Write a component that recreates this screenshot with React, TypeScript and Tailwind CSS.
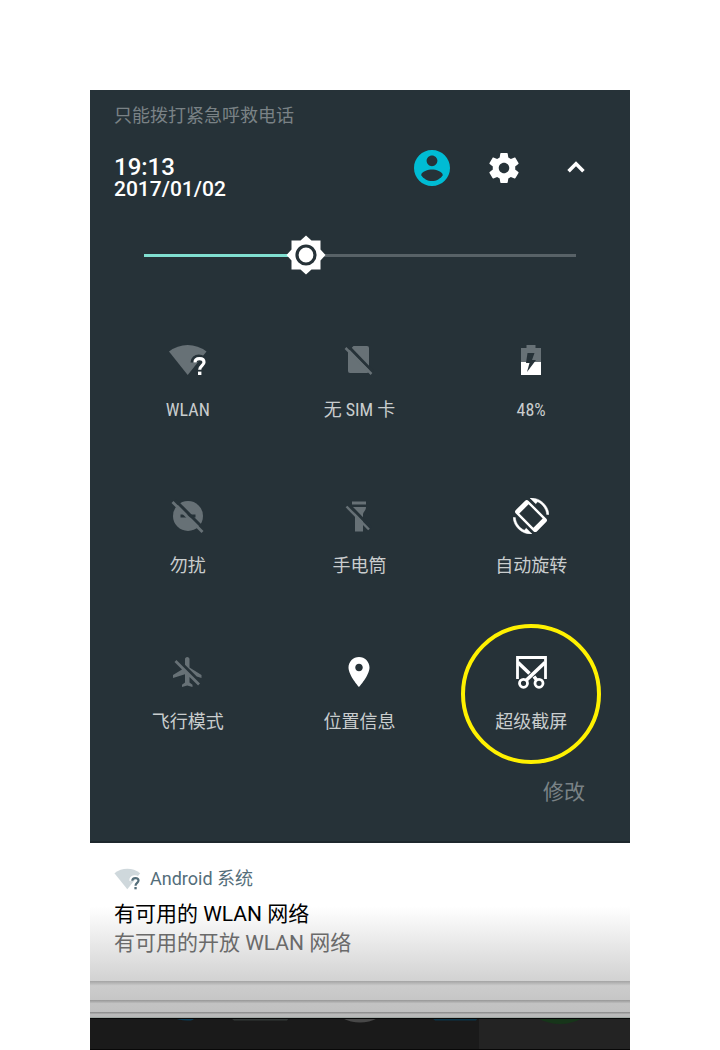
import React, { useState } from "react";

const LATIN_CJK = "font-['Roboto','Noto_Sans_CJK_SC',sans-serif]";

function WifiUnknown({ className, fan, mark, gap }: { className: string; fan: string; mark: string; gap: string }) {
  return (
    <svg viewBox="0 0 38 32" className={className} aria-hidden="true">
      <path d="M0 7.500Q8.500 1 18.700 1T37.500 7.500L18.700 31Z" fill={fan} />
      <path d="M25 18.500c0-3 2.300-4.600 4.800-4.600s4.700 1.600 4.700 4.200c0 3.700-4.300 3.600-4.300 7.200V31" fill="none" stroke={gap} strokeWidth="7" />
      <path d="M26 18.500c0-2.600 1.900-3.900 4.500-3.900s4.500 1.300 4.500 3.700c0 3.200-4.300 3.500-4.300 7.400" fill="none" stroke={mark} strokeWidth="3.200" />
      <rect x="29" y="27.600" width="3.400" height="3.400" fill={mark} />
    </svg>
  );
}

const off = "#677176";
const bg = "#263238";

const tiles = [
  {
    label: "WLAN",
    icon: <WifiUnknown className="h-8 w-[38px]" fan={off} mark="#fff" gap={bg} />,
  },
  {
    label: "无 SIM 卡",
    icon: (
      <svg viewBox="0 0 36 36" className="size-9" aria-hidden="true">
        <path d="M12.500 4H26a2 2 0 0 1 2 2V29a2 2 0 0 1-2 2H9a2 2 0 0 1-2-2V9.500Z" fill={off} />
        <path d="M6.500 3.500 32 30" stroke={bg} strokeWidth="3" />
        <path d="M4.500 6 30.500 32" stroke={off} strokeWidth="2.500" />
      </svg>
    ),
  },
  {
    label: "48%",
    icon: (
      <svg viewBox="0 0 36 36" className="size-9" aria-hidden="true">
        <path d="M8 6h5.500V3h9v3H28v14H8Z" fill={off} />
        <path d="M8 20h20v13H8Z" fill="#fff" />
        <path d="M14.500 11h7l-2.500 7h4l-9 12 2.500-9H13Z" fill={bg} />
      </svg>
    ),
  },
  {
    label: "勿扰",
    icon: (
      <svg viewBox="0 0 36 36" className="size-9" aria-hidden="true">
        <circle cx="18" cy="18" r="15" fill={off} />
        <path d="M10.500 18h15" stroke={bg} strokeWidth="3" />
        <path d="M5 2 35 32" stroke={bg} strokeWidth="3" />
        <path d="M2.500 4 32.500 34" stroke={off} strokeWidth="2.800" />
      </svg>
    ),
  },
  {
    label: "手电筒",
    icon: (
      <svg viewBox="0 0 36 36" className="size-9" aria-hidden="true">
        <path d="M11 3.500h14v3H11ZM11 9h14c0 4-3 4.500-3 8V33.500h-8V17c0-3.500-3-4-3-8Z" fill={off} />
        <path d="M7.500 6.500 30 29.500" stroke={bg} strokeWidth="3" />
        <path d="M5.500 8.500 28 31.500" stroke={off} strokeWidth="2.400" />
      </svg>
    ),
  },
  {
    label: "自动旋转",
    icon: (
      <svg viewBox="0 0 24 24" className="size-9" fill="#fff" aria-hidden="true">
        <path
          d="M16.480 2.520c3.270 1.550 5.610 4.720 5.970 8.480h1.500C23.440 4.840 18.290 0 12 0l-.660.030 3.810 3.810 1.330-1.320zM7.520 21.480C4.250 19.940 1.910 16.760 1.550 13H.050C.560 19.160 5.710 24 12 24l.660-.030-3.810-3.810-1.330 1.320z"
          stroke="#fff"
          strokeWidth=".3"
        />
        <path
          fillRule="evenodd"
          d="M10.230 1.750c-.590-.590-1.540-.590-2.120 0L1.750 8.110c-.590.590-.590 1.540 0 2.120l12.020 12.020c.590.590 1.540.590 2.120 0l6.360-6.360c.590-.590.590-1.540 0-2.120ZM10.400 4.200 4.200 10.400 13.600 19.800 19.800 13.600Z"
        />
      </svg>
    ),
  },
  {
    label: "飞行模式",
    icon: (
      <svg viewBox="0 0 24 24" className="size-9" fill={off} aria-hidden="true">
        <path d="M13 9V3.500c0-.830-.670-1.500-1.500-1.500S10 2.670 10 3.500v3.680l7.830 7.830L21 16v-2l-8-5zM3 5.270l4.990 4.990L2 14v2l8-2.500V19l-2 1.500V22l3.500-1 3.500 1v-1.500L13 19v-3.730L18.730 21 20 19.730 4.270 4 3 5.270z" />
      </svg>
    ),
  },
  {
    label: "位置信息",
    icon: (
      <svg viewBox="0 0 24 24" className="size-9" fill="#fff" aria-hidden="true">
        <path d="M12 2C8.130 2 5 5.130 5 9c0 5.250 7 13 7 13s7-7.750 7-13c0-3.870-3.130-7-7-7zm0 9.500c-1.380 0-2.500-1.120-2.500-2.500s1.120-2.500 2.500-2.500 2.500 1.120 2.500 2.500-1.120 2.500-2.500 2.500z" />
      </svg>
    ),
  },
  {
    label: "超级截屏",
    ring: true,
    icon: (
      <svg viewBox="0 0 36 36" className="size-9" fill="none" stroke="#fff" strokeWidth="2.800" aria-hidden="true">
        <path d="M4.500 25V3.500h28V25" />
        <path d="M5 8.500 16.500 19.500M32 8.500 13 26.500M21 22.500l3 4" strokeWidth="3.600" />
        <circle cx="10.500" cy="29.300" r="4" />
        <circle cx="26" cy="29.300" r="4" />
      </svg>
    ),
  },
];

export default function App() {
  const [level, setLevel] = useState(37.5);
  return (
    <div className={`min-h-screen bg-white px-[12.5%] pt-[90px] ${LATIN_CJK}`}>
      <main>
        <section className="border-b-2 border-[#1e282d] bg-[#263238] pb-[34px]">
          <p className="px-6 pt-3 text-[18px] leading-[28px] text-[#7a8286]">只能拨打紧急呼救电话</p>
          <header className="flex items-center justify-between pl-6 pr-9 pt-[6px]">
            <div className="pt-5 font-medium text-white">
              <time className="block text-[24px] leading-[22px]">19:13</time>
              <time className="block text-[21px] leading-[22px]">2017/01/02</time>
            </div>
            <div className="flex items-center gap-9">
              <button aria-label="用户" className="flex size-9 items-center justify-center text-[#00bcd4]">
                <svg viewBox="2 2 20 20" className="size-9" fill="currentColor">
                  <path d="M12 2C6.480 2 2 6.480 2 12s4.480 10 10 10 10-4.480 10-10S17.520 2 12 2zm0 3c1.660 0 3 1.340 3 3s-1.340 3-3 3-3-1.340-3-3 1.340-3 3-3zm0 14.200c-2.500 0-4.710-1.280-6-3.220.030-1.990 4-3.080 6-3.080 1.990 0 5.970 1.090 6 3.080-1.290 1.940-3.500 3.220-6 3.220z" />
                </svg>
              </button>
              <button aria-label="设置" className="text-white">
                <svg viewBox="0 0 24 24" className="size-9" fill="currentColor">
                  <path d="M19.430 12.980c.040-.320.070-.640.070-.980s-.030-.660-.070-.980l2.110-1.650c.190-.150.240-.420.120-.640l-2-3.460c-.120-.220-.390-.300-.610-.220l-2.490 1c-.520-.400-1.080-.730-1.690-.980l-.380-2.650C14.460 2.180 14.250 2 14 2h-4c-.250 0-.460.180-.490.420l-.380 2.650c-.610.250-1.170.590-1.690.980l-2.490-1c-.230-.090-.490 0-.610.220l-2 3.460c-.130.220-.070.490.120.640l2.110 1.650c-.040.320-.070.650-.070.980s.030.660.070.980l-2.110 1.650c-.190.150-.240.420-.120.640l2 3.460c.120.220.390.300.610.220l2.490-1c.520.400 1.080.730 1.690.980l.380 2.650c.030.240.240.420.490.420h4c.250 0 .460-.180.490-.420l.380-2.650c.610-.250 1.170-.590 1.690-.980l2.490 1c.230.090.490 0 .610-.220l2-3.460c.120-.220.070-.490-.120-.640l-2.110-1.650zM12 15.500c-1.930 0-3.500-1.570-3.500-3.500s1.570-3.500 3.500-3.500 3.500 1.570 3.500 3.500-1.570 3.500-3.500 3.500z" />
                </svg>
              </button>
              <button aria-label="收起" className="text-white">
                <svg viewBox="0 0 24 24" className="size-9" fill="currentColor">
                  <path d="M12 7.500l-5.800 5.800 1.700 1.700L12 10.900l4.100 4.100 1.700-1.700z" />
                </svg>
              </button>
            </div>
          </header>

          <div className="relative mx-[54px] mt-[35px] flex h-10 items-center">
            <div className="h-[3px] w-full bg-[#586267]">
              <div className="h-full bg-[#80dfd0]" style={{ width: `${level}%` }} />
            </div>
            <svg viewBox="0 0 40 40" className="absolute size-10 -translate-x-1/2" style={{ left: `${level}%` }} aria-hidden="true">
              <path d="M20 .500 25.500 5.500H34.500V14.500L39.500 20 34.500 25.500V34.500H25.500L20 39.500 14.500 34.500H5.500V25.500L.500 20 5.500 14.500V5.500H14.500Z" fill="#fff" />
              <circle cx="20" cy="20" r="9" fill="#fff" stroke={bg} strokeWidth="3.200" />
            </svg>
            <input
              type="range"
              aria-label="亮度"
              step="0.5"
              value={level}
              onChange={(e) => setLevel(Number(e.target.value))}
              className="absolute inset-0 w-full cursor-pointer opacity-0"
            />
          </div>

          <div className="grid grid-cols-3 gap-y-[76px] pl-3 pr-[13px] pt-[67px]">
            {tiles.map((t) => (
              <button key={t.label} className="relative flex flex-col items-center gap-5 text-[#c9cdce]">
                <span className="flex h-9 items-center">{t.icon}</span>
                <span className="font-['Roboto_Condensed','Roboto','Noto_Sans_CJK_SC',sans-serif] text-[18px] leading-[24px]">{t.label}</span>
                {t.ring && (
                  <span className="absolute left-1/2 top-1/2 size-[140px] -translate-x-1/2 -translate-y-1/2 rounded-full border-4 border-[#fff100]" />
                )}
              </button>
            ))}
          </div>
          <div className="flex justify-end pr-[45px] pt-[43px]">
            <button className="text-[21px] leading-[30px] text-[#7a8286]">修改</button>
          </div>
        </section>

        <section className="bg-linear-to-b from-white from-[46%] to-[#d2d2d2]">
          <article className="h-[138px] px-6 pt-[22px]">
            <div className="flex items-center gap-[9px]">
              <WifiUnknown className="h-[22px] w-[27px]" fan="#cfd8dc" mark="#546e7a" gap="#fff" />
              <span className="text-[18px] leading-[28px] text-[#546e7a]">Android 系统</span>
            </div>
            <h2 className="mt-[7px] text-[21px] leading-[28px] text-black">有可用的 WLAN 网络</h2>
            <p className="text-[21px] leading-[30px] text-[#6a6a6a]">有可用的开放 WLAN 网络</p>
          </article>
        </section>
        <div className="h-[19px] bg-linear-to-b from-[#a4a4a4] via-[#cccccc] via-25% to-[#c6c6c6]" />
        <div className="h-3 bg-linear-to-b from-[#969696] via-[#c3c3c3] via-30% to-[#c0c0c0]" />
        <div className="h-[6px] border-b border-[#a0a8a4] bg-linear-to-b from-[#888888] via-[#bababa] via-50% to-[#b8b8b8]" />
        <div className="h-8 overflow-hidden bg-[#1a1a1a]">
          <svg viewBox="0 0 540 32" preserveAspectRatio="none" className="h-8 w-full" aria-hidden="true">
            <rect x="389" width="151" height="32" fill="#232323" />
            <path d="M84 0h21q-2 3-8 2.500Q89 2 84 0Z" fill="#0d3c55" />
            <path d="M141 0h58l-2 2.500h-53Z" fill="#333837" />
            <path d="M252 0h36q-18 9-36 0Z" fill="#484848" />
            <path d="M342 0h46l-2 2.500h-41Z" fill="#0c3448" />
            <path d="M447 0h46q-23 12-46 0Z" fill="#17351a" />
            <path d="M0 .500h540M0 31.500h540" stroke="#080808" />
          </svg>
        </div>
      </main>
    </div>
  );
}
